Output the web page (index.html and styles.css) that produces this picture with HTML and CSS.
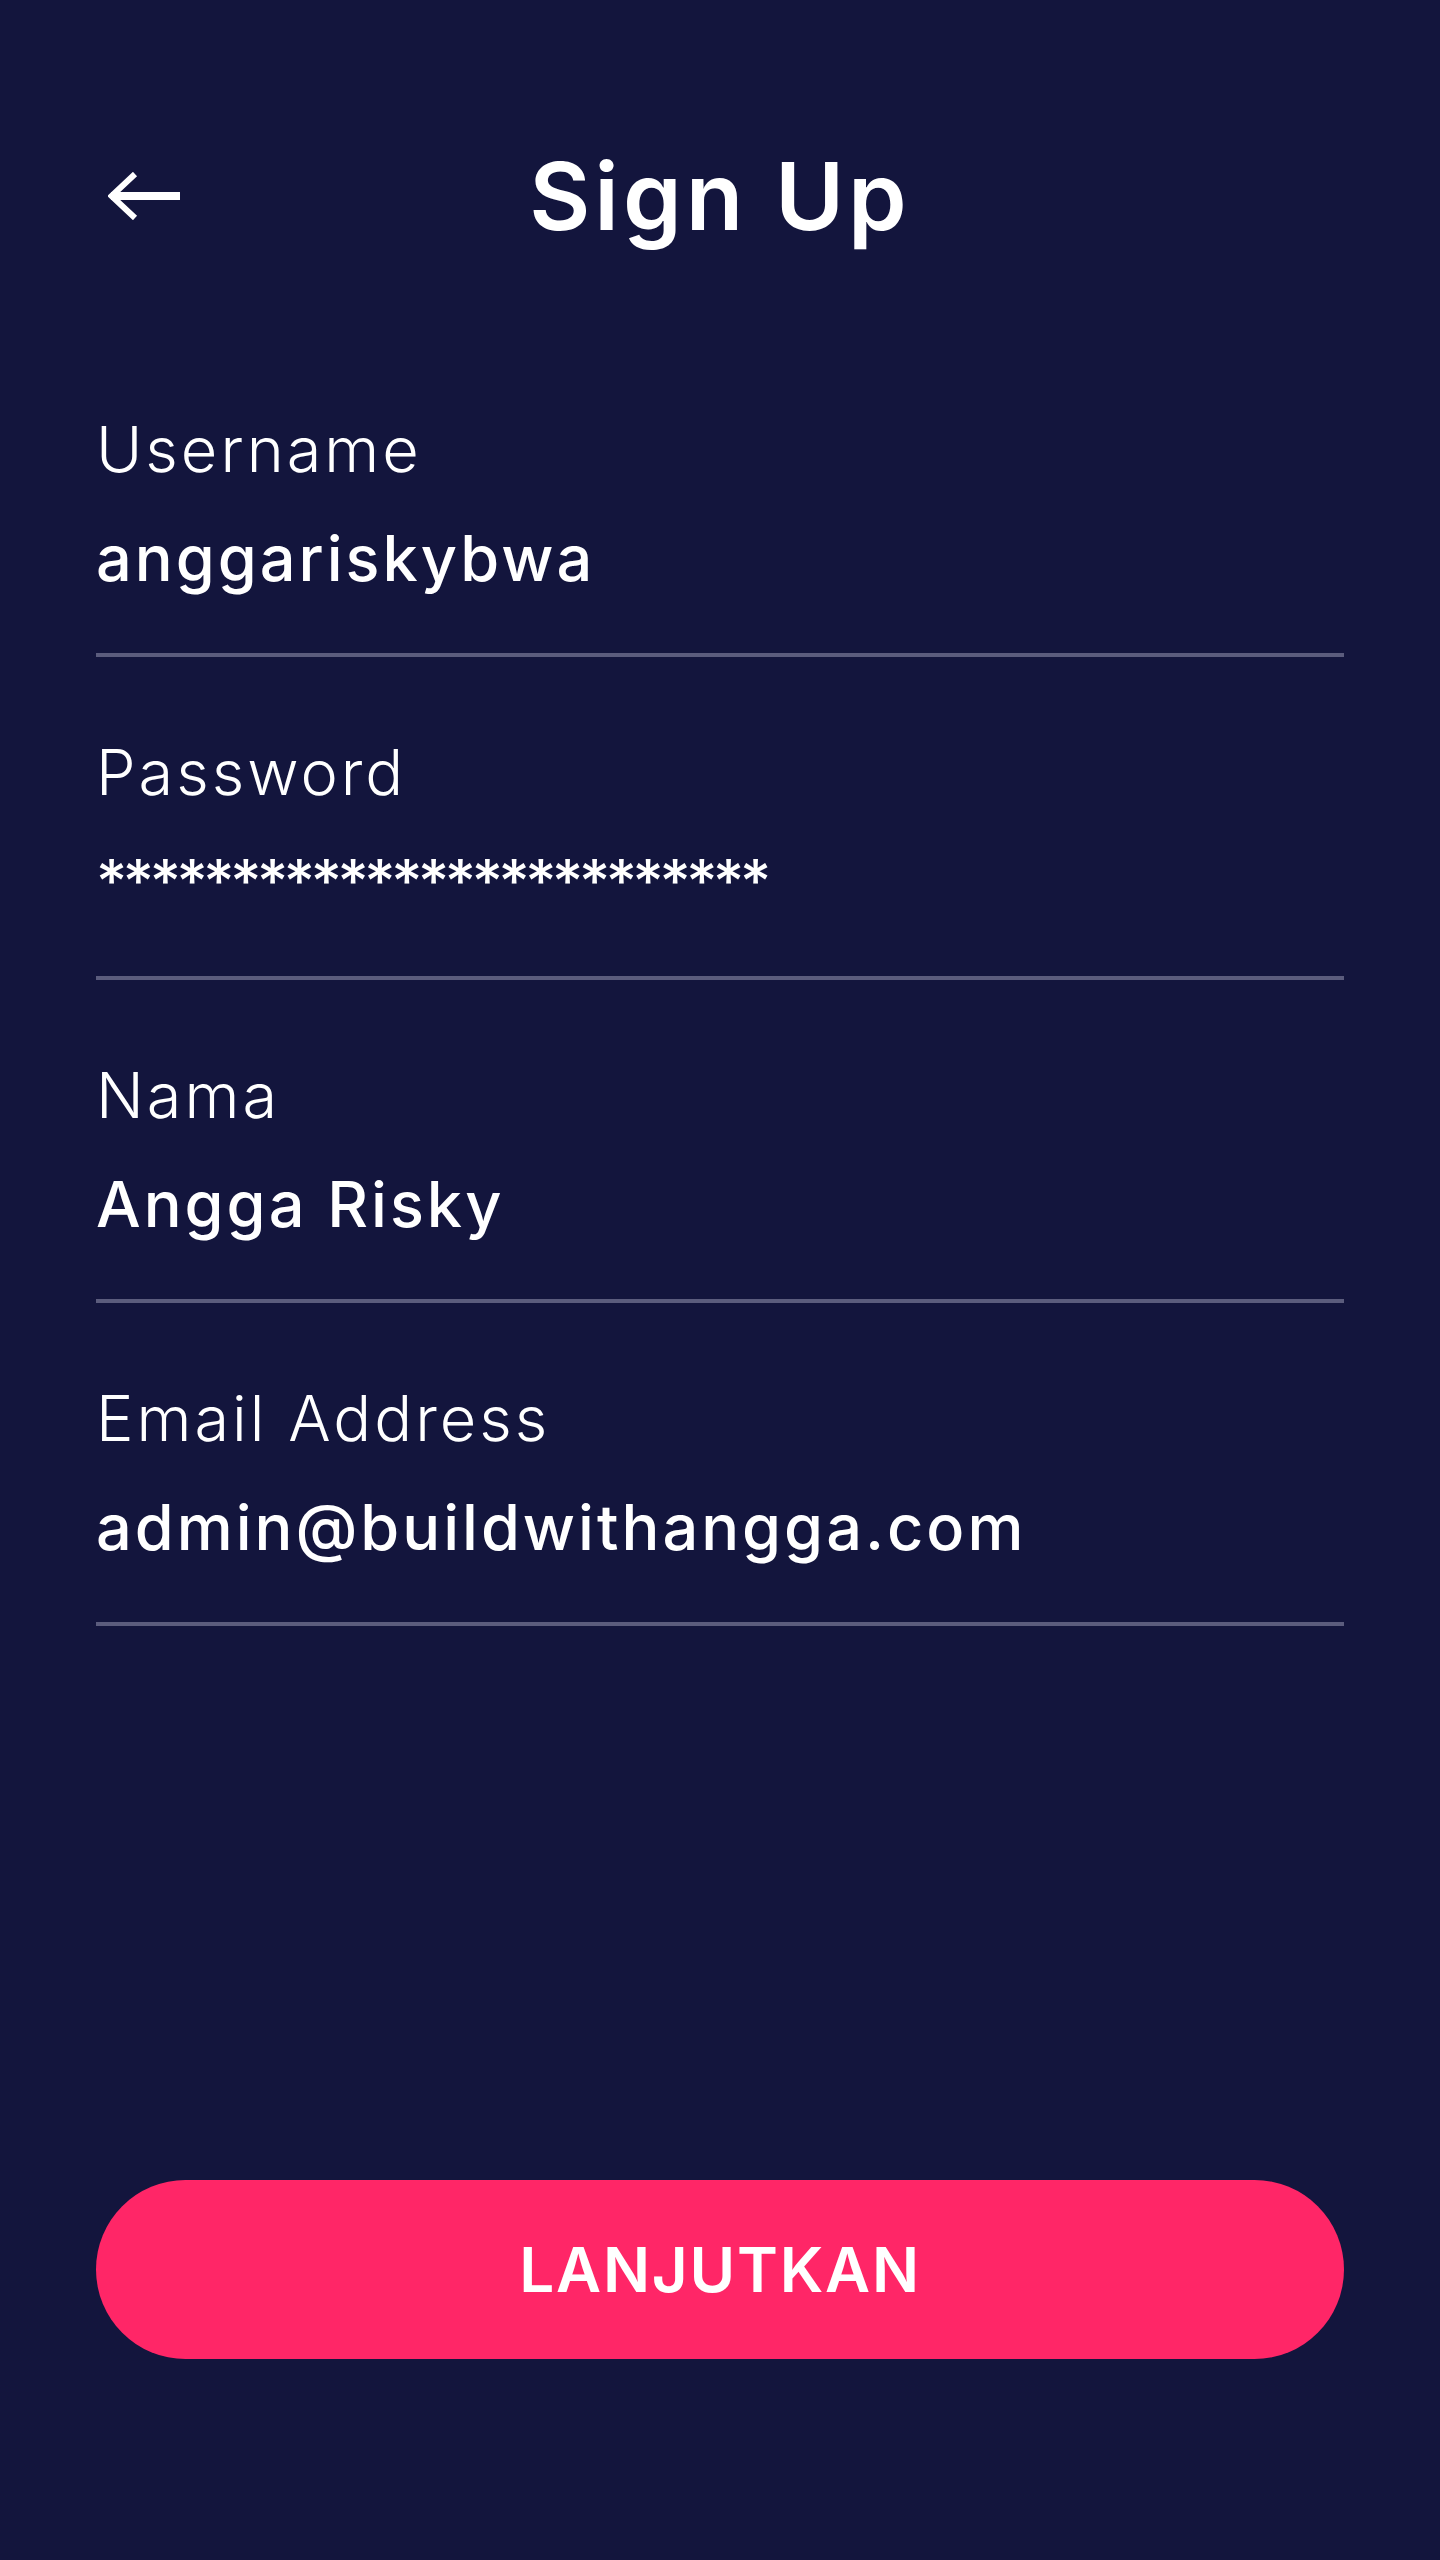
FILE: index.html
```html
<!DOCTYPE html>
<html lang="id">
<head>
<meta charset="utf-8">
<title>Sign Up</title>
<link rel="stylesheet" href="styles.css">
</head>
<body>
<div class="page">
  <header class="header">
    <div class="back">
      <svg width="74" height="48" viewBox="0 0 74 48" aria-hidden="true">
        <path d="M3 24 H72" stroke="#fff" stroke-width="8" fill="none"/>
        <path d="M27 2 L3.5 24 L27 46" stroke="#fff" stroke-width="6" fill="none" stroke-linejoin="miter"/>
      </svg>
    </div>
    <h1 class="title">Sign Up</h1>
    <div></div>
  </header>
  <main class="form">
    <div class="field">
      <div class="label">Username</div>
      <div class="value">anggariskybwa</div>
    </div>
    <div class="field">
      <div class="label">Password</div>
      <div class="value secret">*************************</div>
    </div>
    <div class="field">
      <div class="label">Nama</div>
      <div class="value">Angga Risky</div>
    </div>
    <div class="field">
      <div class="label">Email Address</div>
      <div class="value">admin@buildwithangga.com</div>
    </div>
  </main>
  <button class="cta" type="button">LANJUTKAN</button>
</div>
</body>
</html>
```
FILE: styles.css
```css
* { box-sizing: border-box; }
html, body { margin: 0; padding: 0; }
body {
  background: #13153d;
  color: #ffffff;
  font-family: "Inter", "Open Sans", "Liberation Sans", sans-serif;
}
.page {
  min-height: 2560px;
  padding: 136px 96px 201px;
  display: flex;
  flex-direction: column;
}
.header {
  display: grid;
  grid-template-columns: 1fr auto 1fr;
  align-items: center;
  height: 120px;
}
.back {
  display: flex;
  align-items: center;
  padding-left: 12px;
}
.back svg { display: block; }
.title {
  margin: 0;
  font-size: 94px;
  font-weight: 600;
  line-height: 120px;
  letter-spacing: 4px;
}
.form {
  padding-top: 78px;
  display: flex;
  flex-direction: column;
}
.field {
  padding-top: 75px;
  border-bottom: 4px solid #5b5c7d;
  display: flex;
  flex-direction: column;
}
.label {
  font-size: 63px;
  font-weight: 300;
  line-height: 80px;
  height: 80px;
  letter-spacing: 3px;
}
.value {
  margin-top: 29px;
  font-size: 63px;
  font-weight: 500;
  line-height: 80px;
  height: 80px;
  margin-bottom: 55px;
  letter-spacing: 3px;
}
.secret {
  font-size: 60px;
  letter-spacing: -4.4px;
}
.cta {
  margin-top: auto;
  height: 179px;
  width: 100%;
  border: 0;
  border-radius: 90px;
  background: #ff2667;
  color: #ffffff;
  font-family: "Inter", "Open Sans", "Liberation Sans", sans-serif;
  font-size: 62px;
  font-weight: 600;
  letter-spacing: 1.8px;
  padding: 0;
}
```
